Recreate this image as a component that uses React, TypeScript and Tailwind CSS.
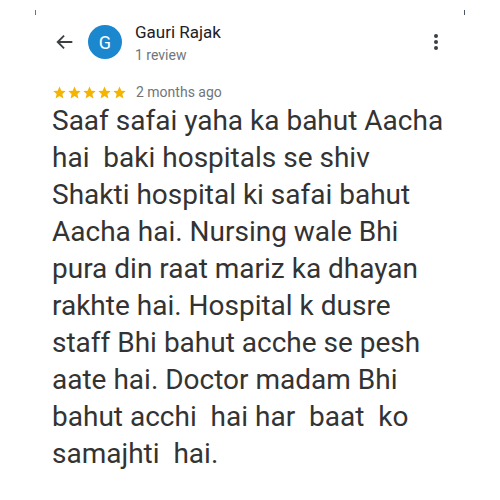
import React from "react";

const lines = [
  "Saaf safai yaha ka bahut Aacha",
  "hai\u00a0 baki hospitals se shiv",
  "Shakti hospital ki safai bahut",
  "Aacha hai. Nursing wale Bhi",
  "pura din raat mariz ka dhayan",
  "rakhte hai. Hospital k dusre",
  "staff Bhi bahut acche se pesh",
  "aate hai. Doctor madam Bhi",
  "bahut acchi\u00a0 hai har\u00a0 baat\u00a0 ko",
  "samajhti\u00a0 hai.",
];

const Star = () => (
  <svg viewBox="0 0 24 24" className="w-[15px] h-[15px]" fill="#f5b400">
    <path d="M12 2.5l2.9 6.6 7.1.6-5.4 4.7 1.6 7-6.2-3.7-6.2 3.7 1.6-7L2 9.7l7.1-.6z" />
  </svg>
);

const App: React.FC = () => {
  return (
    <div className="w-[500px] h-[500px] bg-white relative overflow-hidden font-['Roboto',sans-serif]">
      <div className="absolute left-[35px] top-[10px] w-[1px] h-[5px] bg-gray-500" />
      <div className="absolute left-[464px] top-[10px] w-[1px] h-[5px] bg-gray-600" />

      <div className="flex items-start pl-[54px] pr-[62px] pt-[22px]">
        <svg viewBox="0 0 24 24" className="w-[22px] h-[22px] mt-[9px]" fill="none" stroke="#3c4043" strokeWidth="2">
          <path d="M20 12H5M11 5l-7 7 7 7" />
        </svg>
        <div className="ml-[12px] mt-[3px] w-[34px] h-[34px] rounded-full bg-[#1a87cf] text-white flex items-center justify-center text-[18px]">
          G
        </div>
        <div className="ml-[13px] flex flex-col">
          <span className="text-[17px] leading-[20px] text-[#202124]">Gauri Rajak</span>
          <span className="text-[14px] leading-[20px] mt-[3px] text-[#70757a]">1 review</span>
        </div>
        <div className="ml-auto mt-[12px] flex flex-col gap-[2px]">
          <span className="w-[4px] h-[4px] rounded-full bg-[#3c4043]" />
          <span className="w-[4px] h-[4px] rounded-full bg-[#3c4043]" />
          <span className="w-[4px] h-[4px] rounded-full bg-[#3c4043]" />
        </div>
      </div>

      <div className="flex items-center pl-[52px] mt-[17px]">
        <div className="flex">
          <Star />
          <Star />
          <Star />
          <Star />
          <Star />
        </div>
        <span className="ml-[9px] text-[14px] text-[#70757a]">2 months ago</span>
      </div>

      <div className="pl-[52px] -mt-[1px] text-[28px] leading-[37px] text-[#333333]">
        {lines.map((l, i) => (
          <div key={i} className="whitespace-pre">
            {l}
          </div>
        ))}
      </div>
    </div>
  );
};

export default App;
